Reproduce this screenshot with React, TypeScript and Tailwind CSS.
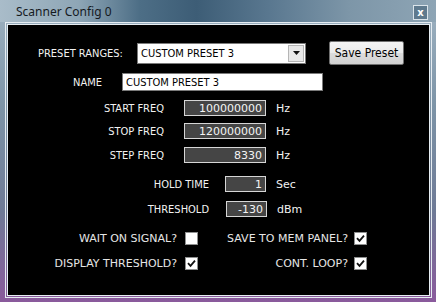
import React from "react";

const lbl = "text-[#f2f2f2] text-[11px] leading-none whitespace-nowrap";
const labelFont = { fontFamily: '"DejaVu Sans Condensed", "Liberation Sans", sans-serif' } as React.CSSProperties;

function Check({ checked }: { checked: boolean }) {
  return (
    <div className="w-[13px] h-[13px] bg-white border border-[#8e8f8f] flex items-center justify-center shrink-0">
      {checked && (
        <svg width="9" height="9" viewBox="0 0 9 9">
          <path d="M1 4.2 L3.5 6.8 L8 1.6" fill="none" stroke="#111" strokeWidth="1.8" />
        </svg>
      )}
    </div>
  );
}

function NumBox({ value, w }: { value: string; w: string }) {
  return (
    <div
      className={`${w} h-[16px] bg-[#454545] border border-[#d6d6d6] flex items-center justify-end pr-[3px] text-[11px] text-[#f4f4f4] leading-none`}
      style={{ fontFamily: '"DejaVu Sans", sans-serif' }}
    >
      {value}
    </div>
  );
}

function Unit({ children }: { children: React.ReactNode }) {
  return (
    <div className="ml-[10px] text-[11px] text-[#f2f2f2] leading-none" style={{ fontFamily: '"DejaVu Sans", sans-serif' }}>
      {children}
    </div>
  );
}

export default function App() {
  return (
    <div
      className="w-[436px] h-[302px] flex flex-col overflow-hidden"
      style={{ background: "linear-gradient(to bottom, #9fb3c2 0%, #7d94a7 35%, #6e7a96 70%, #8a5a9c 100%)" }}
    >
      <div
        className="h-[22px] shrink-0 flex items-start pl-[16px] pr-[8px]"
        style={{ background: "linear-gradient(to right, #a9bcc9 0%, #8ea6b6 18%, #4d6e86 32%, #3d5d76 45%, #5a7890 62%, #7d96a8 80%, #8ea5b5 100%)" }}
      >
        <div className="mt-[6px] text-[12px] text-[#151a1f] leading-none" style={{ fontFamily: '"Noto Sans", "Open Sans", sans-serif' }}>
          Scanner Config 0
        </div>
        <div className="ml-auto mt-[5px] w-[15px] h-[15px] border border-[#dbe4ea] bg-[#5f7a8e] flex items-center justify-center">
          <span className="text-white text-[10px] font-bold leading-none" style={{ fontFamily: '"DejaVu Sans", sans-serif' }}>x</span>
        </div>
      </div>
      <div className="ml-[5px] w-[427px] h-[276px] border border-[#e6edf2] p-[1px]">
        <div className="w-full h-full border border-[#e6edf2] bg-black flex flex-col" style={labelFont}>
          {/* Row 1 */}
          <div className="flex items-center h-[24px] mt-[16px]">
            <div className={`w-[129px] pl-[30px] ${lbl}`}>PRESET RANGES:</div>
            <div className="w-[169px] h-[21px] bg-white border border-[#7a7a7a] flex items-center">
              <div className="flex-1 pl-[3px] text-[11px] text-black leading-none">CUSTOM PRESET 3</div>
              <div className="w-[16px] h-[17px] mr-[1px] bg-[#e8e8e8] border border-[#b5b5b5] flex items-center justify-center">
                <svg width="7" height="4" viewBox="0 0 7 4">
                  <path d="M0 0 L7 0 L3.5 4 Z" fill="#111" />
                </svg>
              </div>
            </div>
            <div
              className="ml-[23px] w-[75px] h-[24px] border border-[#707070] rounded-[2px] flex items-center justify-center text-[12px] text-black leading-none"
              style={{ background: "linear-gradient(to bottom, #f4f4f4 0%, #ebebeb 50%, #dcdcdc 51%, #d2d2d2 100%)", fontFamily: '"DejaVu Sans Condensed", "Liberation Sans", sans-serif' }}
            >
              Save Preset
            </div>
          </div>
          {/* Row 2 */}
          <div className="flex items-center h-[18px] mt-[8px]">
            <div className={`w-[114px] pl-[65px] ${lbl}`}>NAME</div>
            <div className="w-[201px] h-[18px] bg-white border border-[#7a7a7a] flex items-center pl-[3px] text-[11px] text-black leading-none">
              CUSTOM PRESET 3
            </div>
          </div>
          {/* Freq rows */}
          <div className="flex items-center h-[16px] mt-[9px]">
            <div className={`w-[156px] text-right ${lbl}`}>START FREQ</div>
            <div className="ml-[20px]"><NumBox value="100000000" w="w-[82px]" /></div>
            <Unit>Hz</Unit>
          </div>
          <div className="flex items-center h-[16px] mt-[7px]">
            <div className={`w-[156px] text-right ${lbl}`}>STOP FREQ</div>
            <div className="ml-[20px]"><NumBox value="120000000" w="w-[82px]" /></div>
            <Unit>Hz</Unit>
          </div>
          <div className="flex items-center h-[16px] mt-[8px]">
            <div className={`w-[156px] text-right ${lbl}`}>STEP FREQ</div>
            <div className="ml-[20px]"><NumBox value="8330" w="w-[82px]" /></div>
            <Unit>Hz</Unit>
          </div>
          <div className="flex items-center h-[16px] mt-[13px]">
            <div className={`w-[201px] text-right ${lbl}`}>HOLD TIME</div>
            <div className="ml-[16px]"><NumBox value="1" w="w-[41px]" /></div>
            <Unit>Sec</Unit>
          </div>
          <div className="flex items-center h-[16px] mt-[9px]">
            <div className={`w-[201px] text-right ${lbl}`}>THRESHOLD</div>
            <div className="ml-[17px]"><NumBox value="-130" w="w-[41px]" /></div>
            <Unit>dBm</Unit>
          </div>
          {/* Checkbox rows */}
          <div className="flex items-center h-[13px] mt-[15px]" style={{ fontFamily: '"DejaVu Sans", sans-serif' }}>
            <div className="w-[169px] text-right text-[11px] text-[#e6e6e6] leading-none whitespace-nowrap">WAIT ON SIGNAL?</div>
            <div className="ml-[8px]"><Check checked={false} /></div>
            <div className="w-[150px] text-right text-[11px] text-[#e6e6e6] leading-none whitespace-nowrap">SAVE TO MEM PANEL?</div>
            <div className="ml-[6px]"><Check checked={true} /></div>
          </div>
          <div className="flex items-center h-[13px] mt-[12px]" style={{ fontFamily: '"DejaVu Sans", sans-serif' }}>
            <div className="w-[169px] text-right text-[11px] text-[#e6e6e6] leading-none whitespace-nowrap">DISPLAY THRESHOLD?</div>
            <div className="ml-[8px]"><Check checked={true} /></div>
            <div className="w-[150px] text-right text-[11px] text-[#e6e6e6] leading-none whitespace-nowrap">CONT. LOOP?</div>
            <div className="ml-[6px]"><Check checked={true} /></div>
          </div>
        </div>
      </div>
    </div>
  );
}
